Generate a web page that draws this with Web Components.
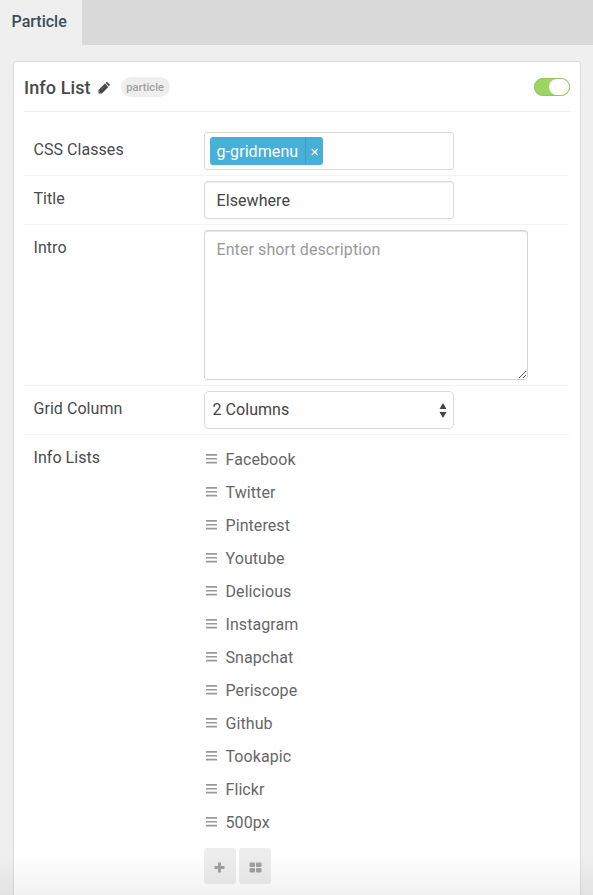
<!DOCTYPE html>
<html lang="en">
<head>
<meta charset="utf-8">
<title>Particle settings</title>
<style>
html, body { height: 100%; }
body { margin: 0; overflow: hidden; background: #efefef; color: #4a4a4a; font: 16px/24px Roboto, "Noto Sans", sans-serif; }
</style>
</head>
<body>
<settings-page></settings-page>
<script>
const define = (name, html, setup) => customElements.define(name, class extends HTMLElement {
  constructor() {
    super();
    const t = document.createElement('template');
    t.innerHTML = '<style>*{box-sizing:border-box}:host{box-sizing:border-box}</style>' + html;
    this.attachShadow({ mode: 'open' }).append(t.content.cloneNode(true));
    if (setup) setup(this.shadowRoot, this);
  }
});

define('tab-bar', `<style>
:host{display:flex;height:45px;background:#d9d9d9}
span{width:82px;height:45px;padding:10px 0 0 11.5px;background:#efefef;color:#3c4d58;font-weight:500;white-space:nowrap}
</style><span><slot></slot></span>`);

define('type-badge', `<style>
:host{display:block;height:20px;width:49px;margin-left:11px;border-radius:10px;background:#eee;color:#a0a0a0;font-size:11px;line-height:21px;font-weight:500;text-align:center;letter-spacing:.1px}
</style><slot></slot>`);

define('toggle-switch', `<style>
:host{display:flex;justify-content:flex-end;width:36px;height:18px;border-radius:9px;background:#9bd562;padding:1px;box-shadow:inset 0 0 0 1px #93c669;margin-left:auto}
i{width:20px;height:16px;border-radius:8px;background:#fff}
</style><i></i>`);

define('panel-header', `<style>
:host{display:flex;align-items:center;height:50px;border-bottom:1px solid #eee}
h1{margin:0;font-size:18px;line-height:24px;font-weight:500;color:#484848;padding-top:2px;letter-spacing:.1px}
svg{margin-left:7px;margin-top:2px}
</style><h1><slot></slot></h1>
<svg width="12" height="12" viewBox="0 0 12 12" fill="#444"><path d="M.5 8 6.9 1.6 10.3 5 3.9 11.4H.5Z"/><path d="M7.6 .9 8.4.3Q9-.2 9.6.4L11.5 2.3Q12 2.9 11.5 3.5L10.9 4.2Z"/><path d="M1.4 9 2.9 10.5H2.2V9.8H1.4Z" fill="#fff"/><path d="M3 7.7 7 3.7" stroke="#999" stroke-width=".5"/></svg>
<type-badge>particle</type-badge><toggle-switch></toggle-switch>`);

define('form-row', `<style>
:host{display:flex;align-items:flex-start;margin-right:1px;padding:5px 0 5px 9.5px;border-bottom:1px solid #f3f3f3}
:host([last]){border:0}
label{width:170.5px;flex:none;padding-top:6px;letter-spacing:.05px}
</style><label></label><slot></slot>`, (r, el) => { r.querySelector('label').textContent = el.getAttribute('label'); });

define('text-box', `<style>
:host{display:block;width:250px;height:38px;border:1px solid #dadada;border-radius:3px;background:#fff;padding:7px 11.5px;box-shadow:inset 0 1px 1px #eee;color:#444;letter-spacing:.08px}
:host([tags]){padding:4px 5px;box-shadow:none}
</style><slot></slot>`);

define('tag-chip', `<style>
:host{display:flex;width:113px;height:28px;border-radius:3px;background:#48b0d7;color:#fff;line-height:29px;overflow:hidden}
span{width:95px;padding-left:6.5px}
b{flex:1;border-left:1px solid #3c9fc4;display:flex;align-items:center;justify-content:center;padding-top:1px}
</style><span><slot></slot></span><b><svg width="8" height="8" viewBox="0 0 8 8" stroke="#fff" stroke-width="1.3"><path d="m.8 1 6 6M6.8 1l-6 6"/></svg></b>`);

define('text-area', `<style>
:host{display:flex;width:324px;height:150px;border:1px solid #d6d6d6;border-radius:3px;background:#fff;padding:7px 0 0 11.5px;box-shadow:inset 0 1px 1px #e4e4e4;color:#9a9a9a;letter-spacing:.09px}
svg{margin-left:auto;align-self:flex-end}
</style><slot></slot><svg width="9" height="9" viewBox="0 0 9 9" stroke="#555" stroke-width="1"><path d="M1 8 8 1M5 8 8 5"/></svg>`);

define('select-box', `<style>
:host{display:flex;align-items:center;justify-content:space-between;width:250px;height:38px;border:1px solid #dadada;border-radius:5px;background:#fff;padding:0 6px 1px 7.5px;color:#444;letter-spacing:.05px}
svg{margin-top:1px}
</style><span><slot></slot></span><svg width="8" height="15" viewBox="0 0 8 15" fill="#444"><path d="M4 0 7.5 6H.5ZM.5 9H7.5L4 15Z"/></svg>`);

define('sort-item', `<style>
:host{display:flex;height:33px;align-items:center;color:#666;letter-spacing:.08px}
svg{margin:0 8.5px 1px 2px;flex:none}
</style><svg width="11" height="10" viewBox="0 0 11 10" fill="#999"><rect width="11" height="1.7" rx=".3"/><rect y="3.9" width="11" height="1.7" rx=".3"/><rect y="7.8" width="11" height="1.7" rx=".3"/></svg><slot></slot>`);

define('icon-button', `<style>
:host{display:flex;width:32px;height:36px;border-radius:3px;background:#ededed;align-items:center;justify-content:center;padding:2px 1px 0 0}
:host([wide]){padding-right:0}
</style><slot></slot>`);

define('particle-list', `<style>
:host{display:block;padding-top:3px}
div{display:flex;gap:3px;padding-top:9px}
</style><section></section><div>
<icon-button><svg width="11" height="11" viewBox="0 0 11 11" fill="#a0a0a0"><path d="M4 1Q4 .5 4.5.5H6.5Q7 .5 7 1V4H10Q10.5 4 10.5 4.5V6.5Q10.5 7 10 7H7V10Q7 10.5 6.5 10.5H4.5Q4 10.5 4 10V7H1Q.5 7 .5 6.5V4.5Q.5 4 1 4H4Z"/></svg></icon-button>
<icon-button wide><svg width="13" height="11" viewBox="0 0 13 11" fill="#a0a0a0"><rect x=".5" y=".5" width="5.5" height="4.5" rx="1"/><rect x="7" y=".5" width="5.5" height="4.5" rx="1"/><rect x=".5" y="6" width="5.5" height="4.5" rx="1"/><rect x="7" y="6" width="5.5" height="4.5" rx="1"/></svg></icon-button></div>`, r => {
  for (const name of ['Facebook','Twitter','Pinterest','Youtube','Delicious','Instagram','Snapchat','Periscope','Github','Tookapic','Flickr','500px']) {
    const item = document.createElement('sort-item');
    item.textContent = name;
    r.querySelector('section').append(item);
  }
});

define('settings-panel', `<style>
:host{display:block;margin:16px 12px 0 13px;height:850px;border:1px solid #dcdcdc;border-radius:3px;background:#fff;padding:0 10px}
form{display:block;padding-top:15px}
</style><panel-header>Info List</panel-header><form>
<form-row label="CSS Classes"><text-box tags><tag-chip>g-gridmenu</tag-chip></text-box></form-row>
<form-row label="Title"><text-box>Elsewhere</text-box></form-row>
<form-row label="Intro"><text-area>Enter short description</text-area></form-row>
<form-row label="Grid Column"><select-box>2 Columns</select-box></form-row>
<form-row label="Info Lists" last><particle-list></particle-list></form-row></form>`);

define('settings-page', `<style>
:host{display:block;height:895px;overflow:hidden;position:relative}
:host::after{content:"";position:absolute;left:0;right:0;bottom:0;height:42px;background:linear-gradient(rgba(0,0,0,0),rgba(0,0,0,.05))}
</style><tab-bar>Particle</tab-bar><settings-panel></settings-panel>`);
</script>
</body>
</html>
